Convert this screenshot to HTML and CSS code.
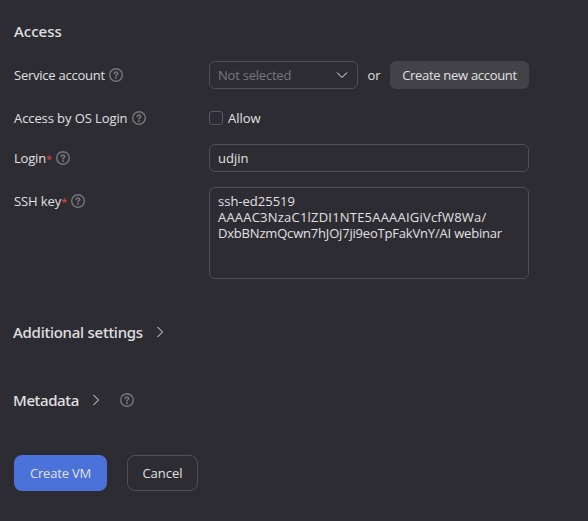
FILE: index.html
```html
<!DOCTYPE html>
<html lang="en">
<head>
<meta charset="utf-8">
<title>Create VM</title>
<link rel="stylesheet" href="styles.css">
</head>
<body>
<svg class="defs" width="0" height="0" aria-hidden="true">
  <symbol id="help" viewBox="0 0 14 14">
    <circle cx="7" cy="7" r="6.3" fill="none" stroke="currentColor" stroke-width="1.4"/>
    <path d="M5.2 5.6C5.3 4.5 6 4 7 4s1.75.55 1.75 1.45C8.75 6.5 7 6.6 7 7.9" fill="none" stroke="currentColor" stroke-width="1.5" stroke-linecap="round"/>
    <circle cx="7" cy="10" r=".95" fill="currentColor"/>
  </symbol>
</svg>
<main class="form">
  <h2 class="title">Access</h2>
  <div class="row row-service">
    <div class="label"><span class="t-service">Service account</span><svg class="help"><use href="#help"/></svg></div>
    <div class="controls">
      <div class="field select"><span class="t-not">Not selected</span><svg class="down" viewBox="0 0 12 8"><path d="M1 1.5l5 5 5-5"/></svg></div>
      <span class="or">or</span>
      <button class="btn create-account"><span class="t-new">Create new account</span></button>
    </div>
  </div>
  <div class="row row-os">
    <div class="label"><span class="t-os">Access by OS Login</span><svg class="help"><use href="#help"/></svg></div>
    <div class="check"><span class="box"></span><span class="t-allow">Allow</span></div>
  </div>
  <div class="row row-login">
    <div class="label"><span class="t-login">Login<b>*</b></span><svg class="help"><use href="#help"/></svg></div>
    <div class="field input"><span class="t-udjin">udjin</span></div>
  </div>
  <div class="row row-ssh">
    <div class="label"><span class="t-ssh">SSH key<b>*</b></span><svg class="help"><use href="#help"/></svg></div>
    <div class="field area"><span class="k1">ssh-ed25519</span><span class="k2">AAAAC3NzaC1lZDI1NTE5AAAAIGiVcfW8Wa/</span><span class="k3">DxbBNzmQcwn7hJOj7ji9eoTpFakVnY/AI webinar</span></div>
  </div>
  <div class="section additional"><span class="t-add">Additional settings</span><svg class="right" viewBox="0 0 8 12"><path d="M1.5 1l5 5-5 5"/></svg></div>
  <div class="section metadata"><span class="t-meta">Metadata</span><svg class="right" viewBox="0 0 8 12"><path d="M1.5 1l5 5-5 5"/></svg><svg class="help"><use href="#help"/></svg></div>
  <div class="actions">
    <button class="btn primary"><span class="t-vm">Create VM</span></button>
    <button class="btn outline"><span class="t-cancel">Cancel</span></button>
  </div>
</main>
</body>
</html>
```
FILE: styles.css
```css
* { box-sizing: border-box; }
body {
  margin: 0;
  background: #2d2c33;
  color: #e0e0e2;
  font: 13px/16px "Open Sans", "Noto Sans", sans-serif;
}
.defs { display: block; height: 0; }
.form { padding: 21px 0 0 14px; white-space: nowrap; }
.title { margin: 0 0 20px; font: 500 15px/20px "Noto Sans", sans-serif; }
.row { display: flex; width: 515px; }
.row-service { margin-bottom: 15px; }
.row-os { margin-bottom: 12px; }
.row-login { margin-bottom: 15px; }
.label { display: flex; align-items: center; width: 195px; height: 28px; }
.label b { color: #e5484d; font-weight: 400; font-size: 11px; }
.help { width: 14px; height: 14px; color: #77767b; margin-left: 4px; flex: none; }
.controls { display: flex; align-items: center; flex: 1; }
.field { border: 1px solid #504f56; border-radius: 6px; padding: 0 8px; }
.select { display: flex; align-items: center; justify-content: space-between; width: 149px; height: 28px; color: #77767b; padding-right: 9px; }
.down { width: 12px; height: 8px; }
.down path, .right path { fill: none; stroke: #f0f0f2; stroke-width: 1; }
.or { width: 32px; text-align: center; }
.btn { display: flex; align-items: center; justify-content: center; border: 0; padding: 0; background: none; color: inherit; font: inherit; }
.create-account { width: 139px; height: 28px; border-radius: 6px; background: #434248; }
.check { display: flex; align-items: center; height: 28px; gap: 5px; }
.box { width: 14px; height: 14px; border: 1px solid #5b5a60; border-radius: 3px; }
.input { display: flex; align-items: center; width: 320px; height: 28px; }
.area { width: 320px; height: 92px; padding-top: 5px; }
.area span { display: block; width: max-content; }
.section { display: flex; align-items: center; height: 20px; margin-left: -1px; font: 500 15px/20px "Noto Sans", sans-serif; }
.additional { margin-top: 43px; }
.metadata { margin-top: 48px; }
.right { width: 8px; height: 12px; margin-left: 13px; }
.metadata .help { margin-left: 20px; }
.actions { display: flex; gap: 20px; margin-top: 45px; }
.primary, .outline { height: 36px; border-radius: 8px; }
.primary { width: 93px; background: #4a72d8; }
.outline { width: 71px; border: 1px solid #504f56; }

.t-service { letter-spacing: -.24px; }
.t-os { letter-spacing: -.09px; }
.t-login { letter-spacing: -.2px; }
.t-ssh { letter-spacing: -.1px; }
.t-not { letter-spacing: -.22px; }
.t-new { letter-spacing: -.3px; }
.k2 { letter-spacing: .21px; }
.k3 { letter-spacing: -.19px; }
.t-add { letter-spacing: -.26px; }
.t-meta { letter-spacing: -.38px; }
.t-vm { letter-spacing: -.2px; }
```
